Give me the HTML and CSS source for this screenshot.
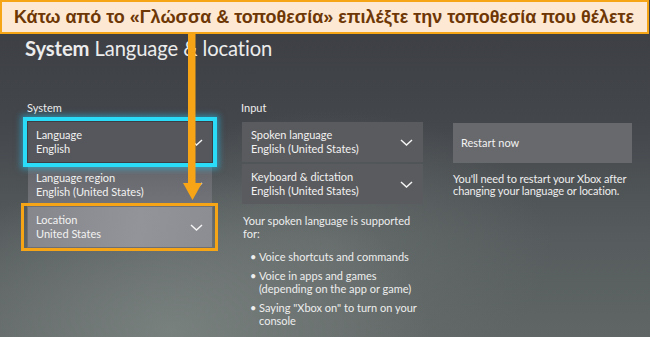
FILE: index.html
```html
<!DOCTYPE html>
<html lang="el">
<head>
<meta charset="utf-8">
<title>System Language &amp; location</title>
<link rel="stylesheet" href="styles.css">
</head>
<body>
<div class="screen">
  <div class="banner">Κάτω από το «Γλώσσα &amp; τοποθεσία» επιλέξτε την τοποθεσία που θέλετε</div>
  <h1 class="title"><b>System</b> Language &amp; location</h1>
  <div class="columns">
    <section class="col">
      <div class="label">System</div>
      <div class="list">
        <div class="item focused">
          <div class="text"><div>Language</div><div>English</div></div>
          <svg class="chev" viewBox="0 0 13 7"><polyline points="1,1 6.5,6 12,1"/></svg>
        </div>
        <div class="item region">
          <div class="text"><div>Language region</div><div>English (United States)</div></div>
          <svg class="chev" viewBox="0 0 13 7"><polyline points="1,1 6.5,6 12,1"/></svg>
        </div>
        <div class="item location">
          <div class="text"><div>Location</div><div>United States</div></div>
          <svg class="chev" viewBox="0 0 13 7"><polyline points="1,1 6.5,6 12,1"/></svg>
        </div>
      </div>
    </section>
    <section class="col">
      <div class="label">Input</div>
      <div class="list">
        <div class="item input">
          <div class="text"><div>Spoken language</div><div>English (United States)</div></div>
          <svg class="chev" viewBox="0 0 13 7"><polyline points="1,1 6.5,6 12,1"/></svg>
        </div>
        <div class="item input">
          <div class="text"><div>Keyboard &amp; dictation</div><div>English (United States)</div></div>
          <svg class="chev" viewBox="0 0 13 7"><polyline points="1,1 6.5,6 12,1"/></svg>
        </div>
      </div>
      <p class="para">Your spoken language is supported for:</p>
      <ul class="bullets">
        <li>Voice shortcuts and commands</li>
        <li>Voice in apps and games (depending on the app or game)</li>
        <li>Saying "Xbox on" to turn on your console</li>
      </ul>
    </section>
    <section class="col">
      <div class="label">&nbsp;</div>
      <div class="button">Restart now</div>
      <p class="desc">You'll need to restart your Xbox after changing your language or location.</p>
    </section>
  </div>
  <svg class="arrow" viewBox="0 0 20 166" width="20" height="166">
    <rect x="5" y="0" width="7.5" height="150"/>
    <polygon points="0,149 19,149 9.5,166"/>
  </svg>
</div>
</body>
</html>
```

FILE: styles.css
```css
html, body {
  margin: 0;
  padding: 0;
}

body {
  width: 650px;
  height: 337px;
  overflow: hidden;
  font-family: Lato, "Open Sans", sans-serif;
  color: #eeeeee;
}

.screen {
  position: relative;
  width: 650px;
  height: 337px;
  overflow: hidden;
  background:
    radial-gradient(ellipse 260px 160px at 170px 330px, rgba(125,133,131,0.85) 0%, rgba(125,133,131,0) 100%),
    radial-gradient(ellipse 220px 140px at 330px 250px, rgba(110,117,115,0.6) 0%, rgba(110,117,115,0) 100%),
    linear-gradient(180deg, #3b3d43 0%, #43464b 35%, #565c5d 70%, #5f6665 100%);
}

.banner {
  box-sizing: border-box;
  height: 34px;
  margin: 0 1px 0 0;
  border: 2px solid #f5a516;
  background: #fde9d3;
  color: #6e3706;
  font-family: "Liberation Sans", Arial, sans-serif;
  font-weight: bold;
  font-size: 18px;
  line-height: 31px;
  padding-left: 12px;
  white-space: nowrap;
  overflow: hidden;
}

.title {
  margin: 3px 0 0 25px;
  font-size: 20.2px;
  line-height: 22px;
  font-weight: normal;
  color: #ececec;
  letter-spacing: -0.1px;
}

.title b {
  font-weight: bold;
}

.columns {
  display: grid;
  grid-template-columns: 184px 181px 179px;
  column-gap: 30px;
  margin: 42px 0 0 28px;
}

.col {
  display: flex;
  flex-direction: column;
}

.label {
  font-size: 11px;
  line-height: 14px;
  height: 14px;
  margin-left: -1px;
  margin-bottom: 7px;
}

.list {
  display: flex;
  flex-direction: column;
  gap: 2px;
}

.item {
  position: relative;
  box-sizing: border-box;
  height: 40px;
  display: flex;
  align-items: center;
  justify-content: space-between;
  padding: 0 9px 0 8px;
  font-size: 11px;
  line-height: 14px;
  color: #f2f2f2;
}

.chev {
  width: 13px;
  height: 7px;
  fill: none;
  stroke: #f4f4f4;
  stroke-width: 1.5;
}

.focused {
  background: #56575c;
  margin-bottom: 1px;
  box-shadow:
    0 0 0 1px #3d3e44,
    0 0 0 5px #2adcf8,
    0 0 6px 7px rgba(30, 200, 250, 0.5);
  z-index: 1;
}

.region {
  background: linear-gradient(180deg, #66676c 0%, #727378 100%);
}

.location {
  background: linear-gradient(100deg, #86878c 0%, #939499 60%, #8c8d92 100%);
  box-shadow: 0 0 0 1px #6e6f74;
}

.location::after {
  content: "";
  position: absolute;
  top: -4px;
  bottom: -4px;
  left: -7px;
  right: -6px;
  border: 3px solid #f5a516;
}

.input {
  background: #5a5b5e;
  padding-left: 9px;
  padding-right: 10px;
}

.para {
  margin: 11px 0 0 1px;
  font-size: 11px;
  line-height: 12.5px;
}

.bullets {
  list-style: none;
  margin: 10px 0 0 0;
  padding: 0 0 0 17px;
  font-size: 11px;
  line-height: 13.5px;
}

.bullets li {
  position: relative;
  margin-bottom: 5px;
}

.bullets li::before {
  content: "•";
  position: absolute;
  left: -9px;
  top: 0;
}

.button {
  box-sizing: border-box;
  height: 40px;
  display: flex;
  align-items: center;
  padding-left: 8px;
  background: #68696c;
  font-size: 11px;
  line-height: 14px;
  color: #f2f2f2;
  margin-top: 1px;
}

.desc {
  margin: 10px 0 0 0;
  font-size: 11px;
  line-height: 11.8px;
  letter-spacing: -0.1px;
}

.arrow {
  position: absolute;
  left: 183px;
  top: 34px;
  fill: #f7a516;
  z-index: 5;
}
```
